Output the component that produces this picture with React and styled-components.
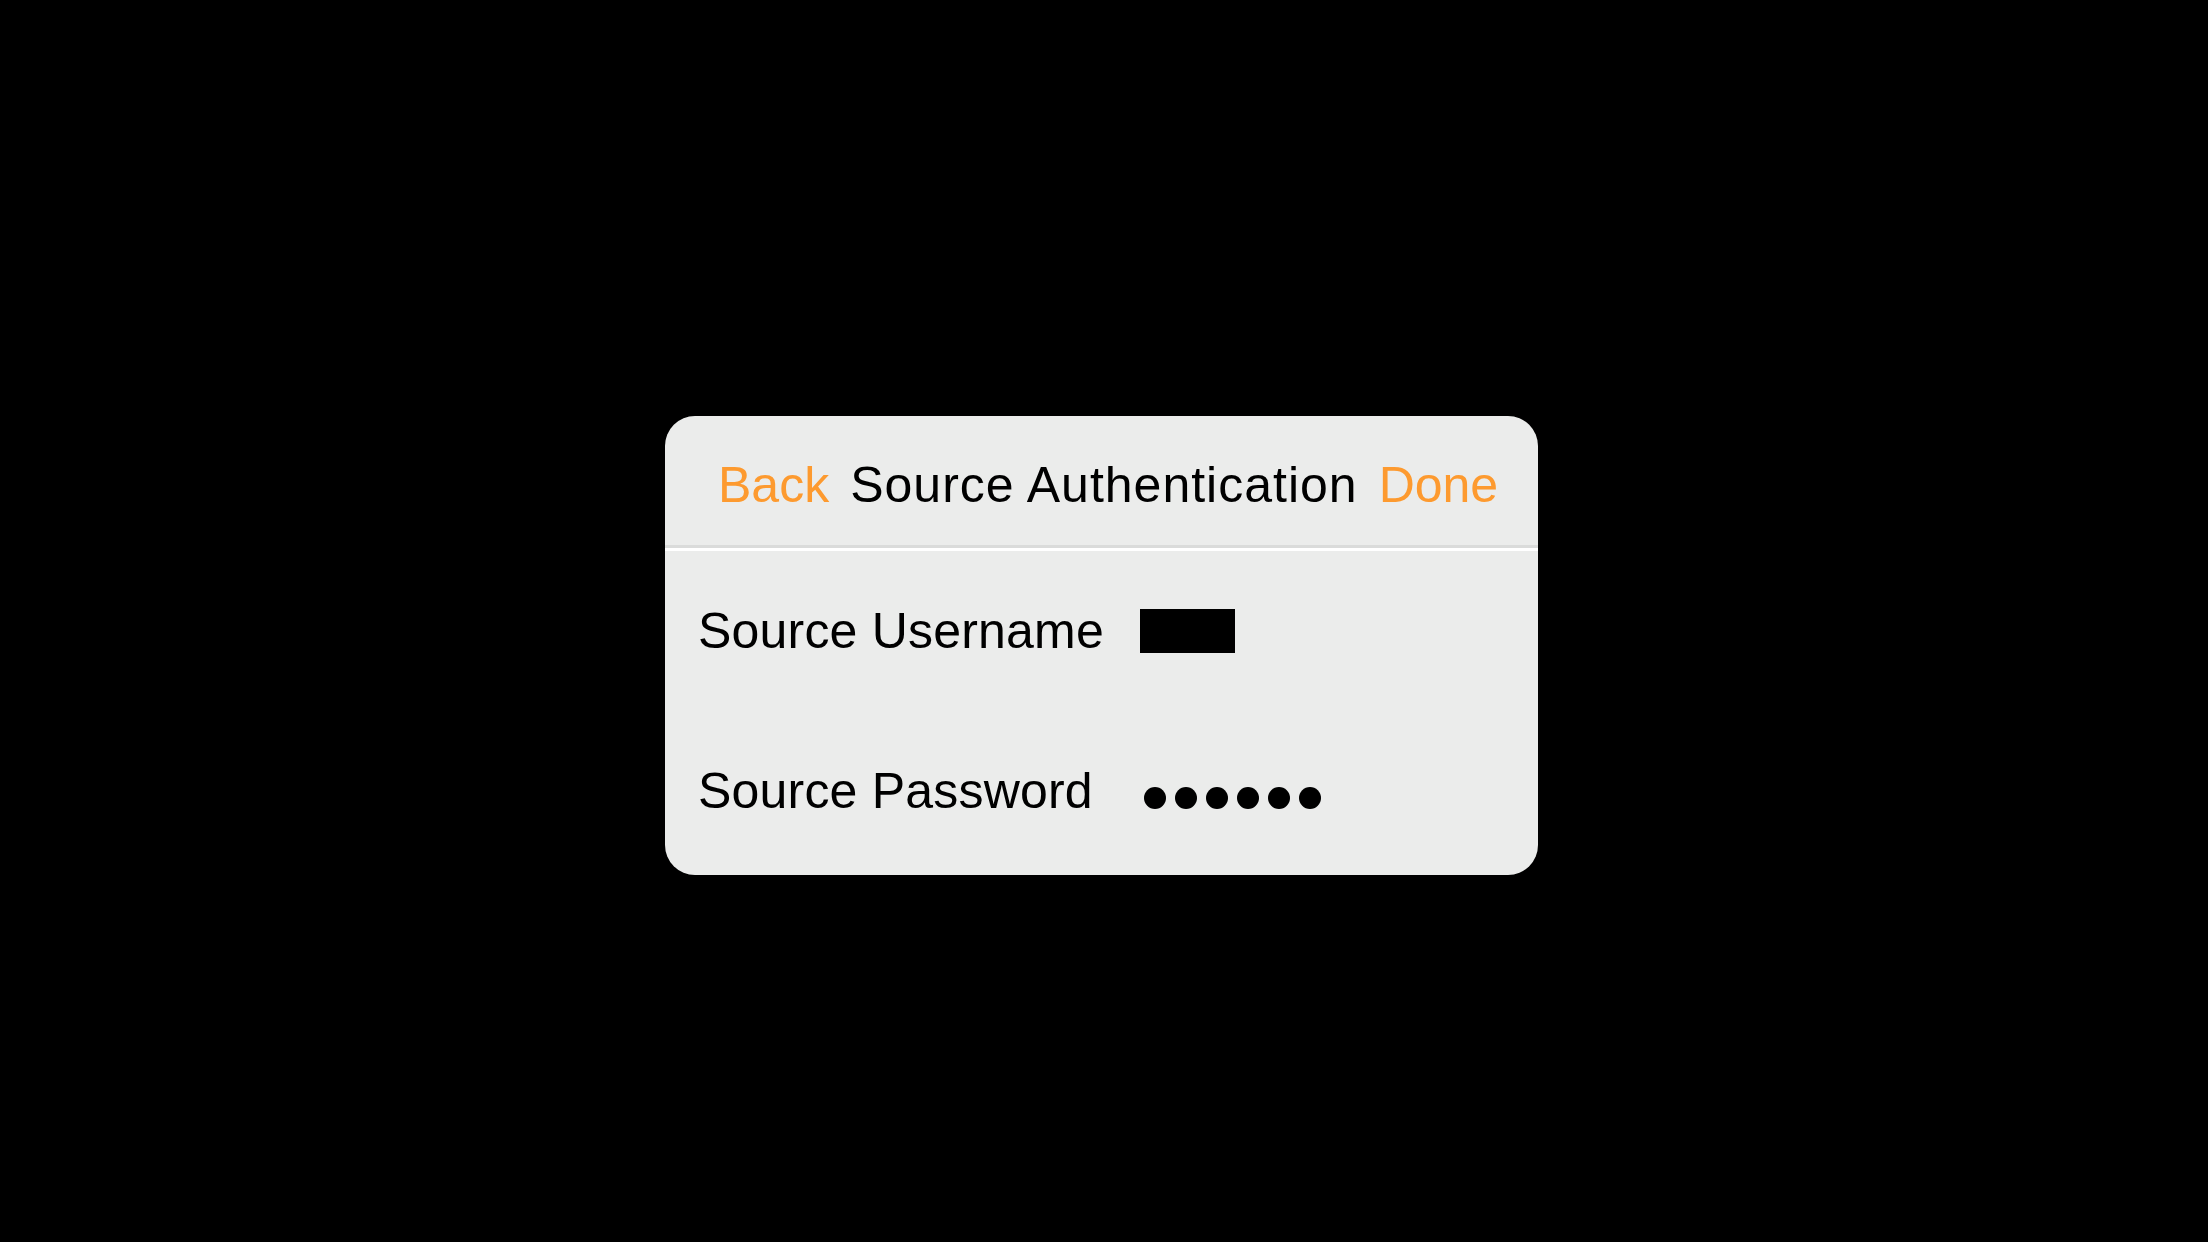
import React from 'react'
import styled, { createGlobalStyle } from 'styled-components'

const GlobalStyle = createGlobalStyle`
  html, body {
    margin: 0;
    padding: 0;
    background: #000;
  }
  body {
    font-family: "Liberation Sans", Arial, sans-serif;
  }
`

const Page = styled.div`
  min-height: 100vh;
  box-sizing: border-box;
  display: flex;
  justify-content: center;
  align-items: center;
  padding: 49px 5px 0 0;
`

const Card = styled.div`
  width: 873px;
  background: #ebeceb;
  border-radius: 30px;
  overflow: hidden;
  color: #000;
`

const Header = styled.div`
  height: 132px;
  box-sizing: border-box;
  display: flex;
  align-items: flex-start;
  gap: 21px;
  padding: 44px 41px 0 53px;
  border-bottom: 3px solid #dadbda;
  font-size: 50px;
  line-height: 1;
  white-space: nowrap;
`

const NavButton = styled.span`
  flex-shrink: 0;
  color: #fd9a2f;
  margin-left: ${(p) => (p.$right ? 'auto' : '0')};
`

const Title = styled.span`
  flex-shrink: 0;
  color: #000;
  letter-spacing: 1px;
`

const Body = styled.div`
  border-top: 3px solid #fff;
  padding: 55px 33px 59px;
  display: flex;
  flex-direction: column;
  gap: 110px;
`

const Row = styled.div`
  display: grid;
  grid-template-columns: 442px 1fr;
  align-items: center;
  font-size: 50px;
  line-height: 1;
`

const Label = styled.span`
  white-space: nowrap;
  letter-spacing: 0.2px;
`

const Redacted = styled.div`
  width: 95px;
  height: 44px;
  background: #000;
`

const Dots = styled.div`
  display: flex;
  gap: 9px;
  padding: 14px 0 0 4px;
`

const Dot = styled.span`
  width: 22px;
  height: 22px;
  border-radius: 50%;
  background: #000;
`

export default function App() {
  return (
    <>
      <GlobalStyle />
      <Page>
        <Card>
          <Header>
            <NavButton>Back</NavButton>
            <Title>Source Authentication</Title>
            <NavButton $right>Done</NavButton>
          </Header>
          <Body>
            <Row>
              <Label>Source Username</Label>
              <Redacted />
            </Row>
            <Row>
              <Label>Source Password</Label>
              <Dots>
                {[0, 1, 2, 3, 4, 5].map((i) => (
                  <Dot key={i} />
                ))}
              </Dots>
            </Row>
          </Body>
        </Card>
      </Page>
    </>
  )
}
